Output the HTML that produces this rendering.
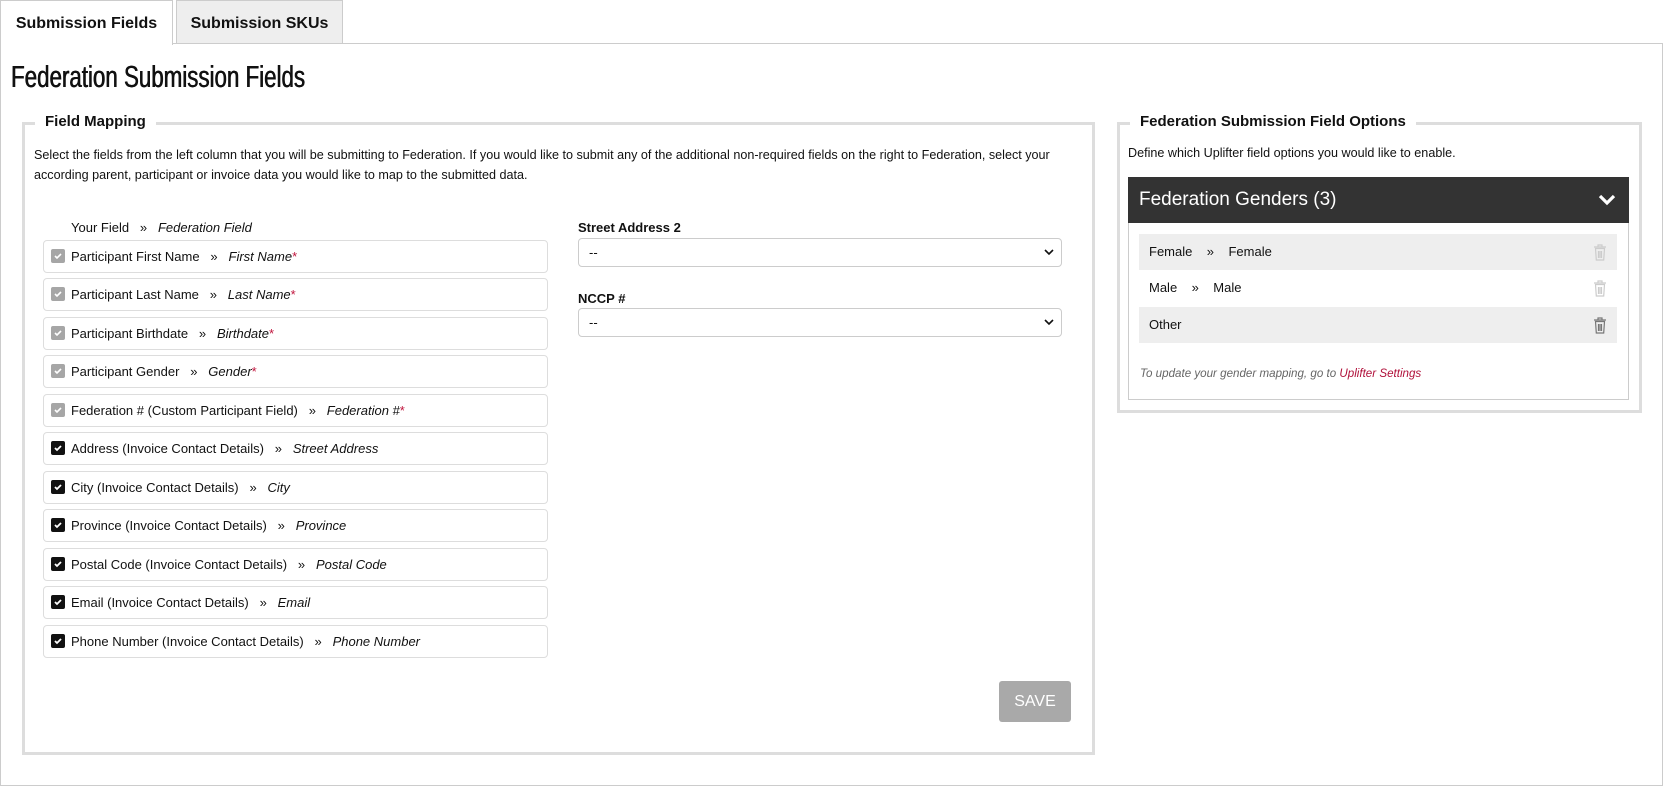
<!DOCTYPE html>
<html><head><meta charset="utf-8"><style>
*{box-sizing:border-box;margin:0;padding:0}
body{width:1663px;height:786px;background:#fff;font-family:"Liberation Sans",Arial,sans-serif;color:#111;position:relative;overflow:hidden;font-size:13px}
.a{position:absolute}
.tab{position:absolute;top:0;height:44px;border:1px solid #ccc;border-bottom:none;font-weight:bold;font-size:16px;line-height:46px;text-align:center}
.box{position:absolute;border:3px solid #ddd}
.leg{position:absolute;background:#fff;font-weight:bold;font-size:15px;padding:0 10px;top:-12px}
.row{position:absolute;left:43px;width:505px;height:33px;border:1px solid #ddd;border-radius:4px;line-height:31px;padding-left:27px;white-space:nowrap}
.cb{position:absolute;left:7px;top:8px;width:14px;height:14px;border-radius:2px}
.cb.g{background:#a6a6a6}.cb.k{background:#111}
.cb svg{position:absolute;left:2px;top:2px}
.r{color:#c0143c}
.sel{position:absolute;left:578px;width:484px;height:29px;border:1px solid #ccc;border-radius:4px;padding-left:10px;line-height:27px;font-size:13px}
.sel svg{position:absolute;right:7px;top:10px}
.lab{position:absolute;left:578px;font-weight:bold;font-size:13px}
.gr{position:absolute;left:1139px;width:478px;height:36px;line-height:36px;padding-left:10px}
.gr.s{background:#eee}
.tr{position:absolute;right:10px;top:10px}
</style></head><body>
<div class="a" style="left:0;top:43px;width:1663px;height:743px;border:1px solid #ccc"></div>
<div class="tab" style="left:0;width:173px;background:#fff;height:45px">Submission Fields</div>
<div class="tab" style="left:176px;width:167px;background:#eee;border-bottom:1px solid #ccc">Submission SKUs</div>
<div class="a" style="left:11px;top:59px;font-size:31px;transform:scaleX(0.72);transform-origin:left;white-space:nowrap;text-shadow:0.5px 0 0 #111,-0.3px 0 0 #111">Federation Submission Fields</div>

<div class="box" style="left:22px;top:122px;width:1073px;height:633px">
<div class="leg" style="left:10px">Field Mapping</div>
</div>
<div class="a" style="left:34px;top:145px;width:1050px;line-height:20px;font-size:12.6px">Select the fields from the left column that you will be submitting to Federation. If you would like to submit any of the additional non-required fields on the right to Federation, select your according parent, participant or invoice data you would like to map to the submitted data.</div>
<div class="a" style="left:71px;top:220px">Your Field &nbsp; » &nbsp; <i>Federation Field</i></div>

<div class="row" style="top:240px"><span class="cb g"><svg width="10" height="10"><path d="M2 5l2 2 4-4" stroke="#fff" stroke-width="1.6" fill="none"/></svg></span>Participant First Name &nbsp; » &nbsp; <i>First Name</i><span class="r">*</span></div>
<div class="row" style="top:278px"><span class="cb g"><svg width="10" height="10"><path d="M2 5l2 2 4-4" stroke="#fff" stroke-width="1.6" fill="none"/></svg></span>Participant Last Name &nbsp; » &nbsp; <i>Last Name</i><span class="r">*</span></div>
<div class="row" style="top:317px"><span class="cb g"><svg width="10" height="10"><path d="M2 5l2 2 4-4" stroke="#fff" stroke-width="1.6" fill="none"/></svg></span>Participant Birthdate &nbsp; » &nbsp; <i>Birthdate</i><span class="r">*</span></div>
<div class="row" style="top:355px"><span class="cb g"><svg width="10" height="10"><path d="M2 5l2 2 4-4" stroke="#fff" stroke-width="1.6" fill="none"/></svg></span>Participant Gender &nbsp; » &nbsp; <i>Gender</i><span class="r">*</span></div>
<div class="row" style="top:394px"><span class="cb g"><svg width="10" height="10"><path d="M2 5l2 2 4-4" stroke="#fff" stroke-width="1.6" fill="none"/></svg></span>Federation # (Custom Participant Field) &nbsp; » &nbsp; <i>Federation #</i><span class="r">*</span></div>
<div class="row" style="top:432px"><span class="cb k"><svg width="10" height="10"><path d="M2 5l2 2 4-4" stroke="#fff" stroke-width="1.8" fill="none"/></svg></span>Address (Invoice Contact Details) &nbsp; » &nbsp; <i>Street Address</i></div>
<div class="row" style="top:471px"><span class="cb k"><svg width="10" height="10"><path d="M2 5l2 2 4-4" stroke="#fff" stroke-width="1.8" fill="none"/></svg></span>City (Invoice Contact Details) &nbsp; » &nbsp; <i>City</i></div>
<div class="row" style="top:509px"><span class="cb k"><svg width="10" height="10"><path d="M2 5l2 2 4-4" stroke="#fff" stroke-width="1.8" fill="none"/></svg></span>Province (Invoice Contact Details) &nbsp; » &nbsp; <i>Province</i></div>
<div class="row" style="top:548px"><span class="cb k"><svg width="10" height="10"><path d="M2 5l2 2 4-4" stroke="#fff" stroke-width="1.8" fill="none"/></svg></span>Postal Code (Invoice Contact Details) &nbsp; » &nbsp; <i>Postal Code</i></div>
<div class="row" style="top:586px"><span class="cb k"><svg width="10" height="10"><path d="M2 5l2 2 4-4" stroke="#fff" stroke-width="1.8" fill="none"/></svg></span>Email (Invoice Contact Details) &nbsp; » &nbsp; <i>Email</i></div>
<div class="row" style="top:625px"><span class="cb k"><svg width="10" height="10"><path d="M2 5l2 2 4-4" stroke="#fff" stroke-width="1.8" fill="none"/></svg></span>Phone Number (Invoice Contact Details) &nbsp; » &nbsp; <i>Phone Number</i></div>

<div class="lab" style="top:220px">Street Address 2</div>
<div class="sel" style="top:238px">--<svg width="10" height="7"><path d="M1 1l4 4 4-4" stroke="#111" stroke-width="1.6" fill="none"/></svg></div>
<div class="lab" style="top:291px">NCCP #</div>
<div class="sel" style="top:308px">--<svg width="10" height="7"><path d="M1 1l4 4 4-4" stroke="#111" stroke-width="1.6" fill="none"/></svg></div>
<div class="a" style="left:999px;top:681px;width:72px;height:41px;background:#a9a9a9;border-radius:3px;color:#fff;text-align:center;line-height:41px;font-size:16px">SAVE</div>

<div class="box" style="left:1117px;top:122px;width:525px;height:291px">
<div class="leg" style="left:10px">Federation Submission Field Options</div>
</div>
<div class="a" style="left:1128px;top:146px;font-size:12.6px">Define which Uplifter field options you would like to enable.</div>
<div class="a" style="left:1128px;top:177px;width:501px;height:223px;border:1px solid #ccc"></div>
<div class="a" style="left:1128px;top:177px;width:501px;height:46px;background:#333;color:#fff;font-size:19px;line-height:46px;padding-left:11px">Federation Genders (3)
<svg style="position:absolute;right:13px;top:17px" width="18" height="12"><path d="M2 2l7 7 7-7" stroke="#fff" stroke-width="3.2" fill="none"/></svg></div>
<div class="gr s" style="top:234px">Female &nbsp;&nbsp; » &nbsp;&nbsp; Female<svg class="tr" width="14" height="17"><path d="M1 3h12M5 3V1h4v2M2.5 4.5h9l-0.8 11.5h-7.4z M5.5 7v7M7 7v7M8.5 7v7" stroke="#ccc" stroke-width="1.2" fill="none"/></svg></div>
<div class="gr" style="top:270px">Male &nbsp;&nbsp; » &nbsp;&nbsp; Male<svg class="tr" width="14" height="17"><path d="M1 3h12M5 3V1h4v2M2.5 4.5h9l-0.8 11.5h-7.4z M5.5 7v7M7 7v7M8.5 7v7" stroke="#ccc" stroke-width="1.2" fill="none"/></svg></div>
<div class="gr s" style="top:307px">Other<svg class="tr" width="14" height="17"><path d="M1 3h12M5 3V1h4v2M2.5 4.5h9l-0.8 11.5h-7.4z M5.5 7v7M7 7v7M8.5 7v7" stroke="#777" stroke-width="1.2" fill="none"/></svg></div>
<div class="a" style="left:1140px;top:367px;font-size:11.6px;font-style:italic;color:#666">To update your gender mapping, go to <span style="color:#b0103a">Uplifter Settings</span></div>
</body></html>
